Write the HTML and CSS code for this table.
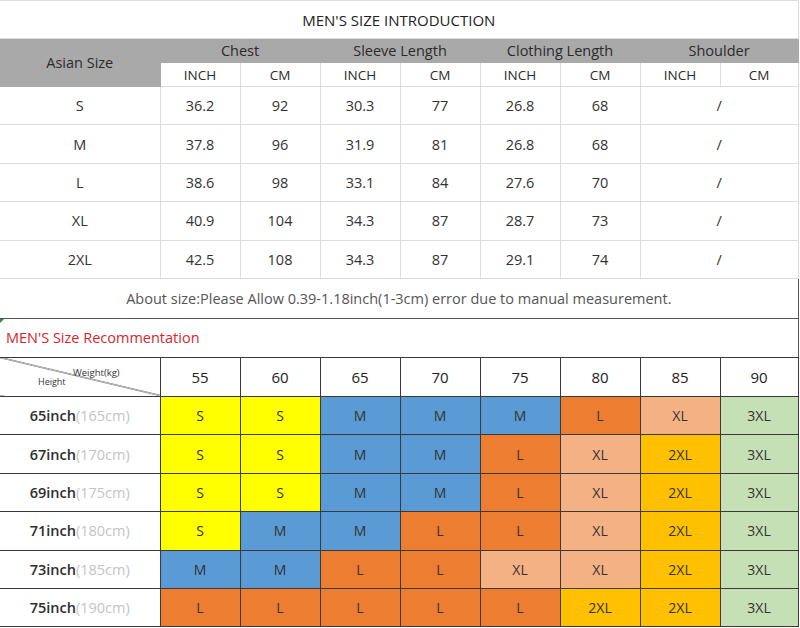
FILE: index.html
```html
<!DOCTYPE html>
<html>
<head>
<meta charset="utf-8">
<link rel="stylesheet" href="styles.css">
</head>
<body>
<div class="sheet">
  <table class="intro">
    <colgroup>
      <col class="c-first"><col class="c80"><col class="c80"><col class="c80"><col class="c80"><col class="c80"><col class="c80"><col class="c80"><col class="c-last">
    </colgroup>
    <tr class="title-row"><td colspan="9" class="title">MEN'S SIZE INTRODUCTION</td></tr>
    <tr class="grp">
      <th rowspan="2" class="asian">Asian Size</th>
      <th colspan="2">Chest</th>
      <th colspan="2">Sleeve Length</th>
      <th colspan="2">Clothing Length</th>
      <th colspan="2">Shoulder</th>
    </tr>
    <tr class="sub">
      <td>INCH</td><td>CM</td><td>INCH</td><td>CM</td><td>INCH</td><td>CM</td><td>INCH</td><td>CM</td>
    </tr>
    <tr class="data"><td>S</td><td>36.2</td><td>92</td><td>30.3</td><td>77</td><td>26.8</td><td>68</td><td colspan="2">/</td></tr>
    <tr class="data"><td>M</td><td>37.8</td><td>96</td><td>31.9</td><td>81</td><td>26.8</td><td>68</td><td colspan="2">/</td></tr>
    <tr class="data"><td>L</td><td>38.6</td><td>98</td><td>33.1</td><td>84</td><td>27.6</td><td>70</td><td colspan="2">/</td></tr>
    <tr class="data"><td>XL</td><td>40.9</td><td>104</td><td>34.3</td><td>87</td><td>28.7</td><td>73</td><td colspan="2">/</td></tr>
    <tr class="data"><td>2XL</td><td>42.5</td><td>108</td><td>34.3</td><td>87</td><td>29.1</td><td>74</td><td colspan="2">/</td></tr>
    <tr class="note-row"><td colspan="9" class="note">About size:Please Allow 0.39-1.18inch(1-3cm) error due to manual measurement.</td></tr>
  </table>

  <div class="rec-title"><span class="mark"></span>MEN'S Size Recommentation</div>

  <table class="rec">
    <colgroup>
      <col class="c-first"><col class="c80"><col class="c80"><col class="c80"><col class="c80"><col class="c80"><col class="c80"><col class="c80"><col class="c-last">
    </colgroup>
    <tr class="rhead">
      <td class="diag"><span class="wt">Weight(kg)</span><span class="ht">Height</span></td>
      <td>55</td><td>60</td><td>65</td><td>70</td><td>75</td><td>80</td><td>85</td><td>90</td>
    </tr>
    <tr>
      <td class="h">65inch<span class="cm">(165cm)</span></td>
      <td class="s">S</td><td class="s">S</td><td class="m">M</td><td class="m">M</td><td class="m">M</td><td class="l">L</td><td class="xl">XL</td><td class="x3">3XL</td>
    </tr>
    <tr>
      <td class="h">67inch<span class="cm">(170cm)</span></td>
      <td class="s">S</td><td class="s">S</td><td class="m">M</td><td class="m">M</td><td class="l">L</td><td class="xl">XL</td><td class="x2">2XL</td><td class="x3">3XL</td>
    </tr>
    <tr>
      <td class="h">69inch<span class="cm">(175cm)</span></td>
      <td class="s">S</td><td class="s">S</td><td class="m">M</td><td class="m">M</td><td class="l">L</td><td class="xl">XL</td><td class="x2">2XL</td><td class="x3">3XL</td>
    </tr>
    <tr>
      <td class="h">71inch<span class="cm">(180cm)</span></td>
      <td class="s">S</td><td class="m">M</td><td class="m">M</td><td class="l">L</td><td class="l">L</td><td class="xl">XL</td><td class="x2">2XL</td><td class="x3">3XL</td>
    </tr>
    <tr>
      <td class="h">73inch<span class="cm">(185cm)</span></td>
      <td class="m">M</td><td class="m">M</td><td class="l">L</td><td class="l">L</td><td class="xl">XL</td><td class="xl">XL</td><td class="x2">2XL</td><td class="x3">3XL</td>
    </tr>
    <tr>
      <td class="h">75inch<span class="cm">(190cm)</span></td>
      <td class="l">L</td><td class="l">L</td><td class="l">L</td><td class="l">L</td><td class="l">L</td><td class="x2">2XL</td><td class="x2">2XL</td><td class="x3">3XL</td>
    </tr>
  </table>
</div>
</body>
</html>
```

FILE: styles.css
```css
html, body {
  margin: 0;
  padding: 0;
  background: #ffffff;
}
body {
  font-family: "Open Sans", "Noto Sans", sans-serif;
  color: #333333;
}
.sheet {
  width: 800px;
  height: 628px;
  overflow: hidden;
}
table {
  border-collapse: collapse;
  table-layout: fixed;
  width: 798px;
}
.c-first { width: 160px; }
.c80 { width: 80px; }
.c-last { width: 78px; }

/* ---------- intro table ---------- */
.intro td, .intro th {
  border: 1px solid #dcdcdc;
  text-align: center;
  padding: 0;
  font-size: 14px;
  font-weight: 400;
  color: #333;
}
.intro .title-row td {
  height: 37px;
  font-size: 15px;
  color: #222;
  border-left: none;
}
.intro .grp th {
  background: #a9a9a9;
  border-color: #a9a9a9;
  height: 23px;
  font-size: 14.5px;
  color: #2b2b2b;
}
.intro .grp th.asian {
  border-left: none;
}
.intro .sub td {
  height: 23px;
  font-size: 13.5px;
  color: #2b2b2b;
}
.intro .data td {
  height: 37.4px;
  font-size: 14.5px;
}
.intro .data td:first-child {
  border-left: none;
}
.intro .note-row td {
  height: 39px;
  color: #555;
  font-size: 14.5px;
  border-left: none;
  border-right: 1px solid #555;
  border-bottom: 1px solid #555;
}

/* ---------- recommendation ---------- */
.rec-title {
  position: relative;
  width: 792px;
  height: 38px;
  line-height: 38px;
  padding-left: 6px;
  font-size: 14.5px;
  color: #d6262c;
  border-right: 1px solid #555;
}
.rec-title .mark {
  position: absolute;
  left: 0;
  top: 0;
  width: 0;
  height: 0;
  border-top: 4px solid #2e8b3a;
  border-right: 4px solid transparent;
}
.rec td {
  border: 1px solid #3a3a3a;
  text-align: center;
  padding: 0;
  font-size: 14px;
  color: #333;
  height: 37.4px;
}
.rec .rhead td {
  height: 38px;
  font-size: 15px;
  color: #222;
}
.rec td:first-child {
  border-left: none;
}
.rec td.diag {
  position: relative;
  background: linear-gradient(to top right, transparent calc(50% - 0.8px), #3a3a3a 50%, transparent calc(50% + 0.8px));
}
.diag .wt {
  position: absolute;
  left: 73px;
  top: 8px;
  font-size: 9.5px;
  color: #333;
}
.diag .ht {
  position: absolute;
  left: 38px;
  top: 17px;
  font-size: 9px;
  color: #333;
}
.rec td.h {
  font-size: 14.5px;
  font-weight: 600;
  color: #2e2e2e;
}
.rec td.h .cm {
  font-weight: 400;
  color: #c4c4c4;
}
.rec td.s { background: #ffff00; }
.rec td.m { background: #5b9bd5; }
.rec td.l { background: #ed7d31; }
.rec td.xl { background: #f4b183; }
.rec td.x2 { background: #ffc000; }
.rec td.x3 { background: #c5e0b4; }
```
